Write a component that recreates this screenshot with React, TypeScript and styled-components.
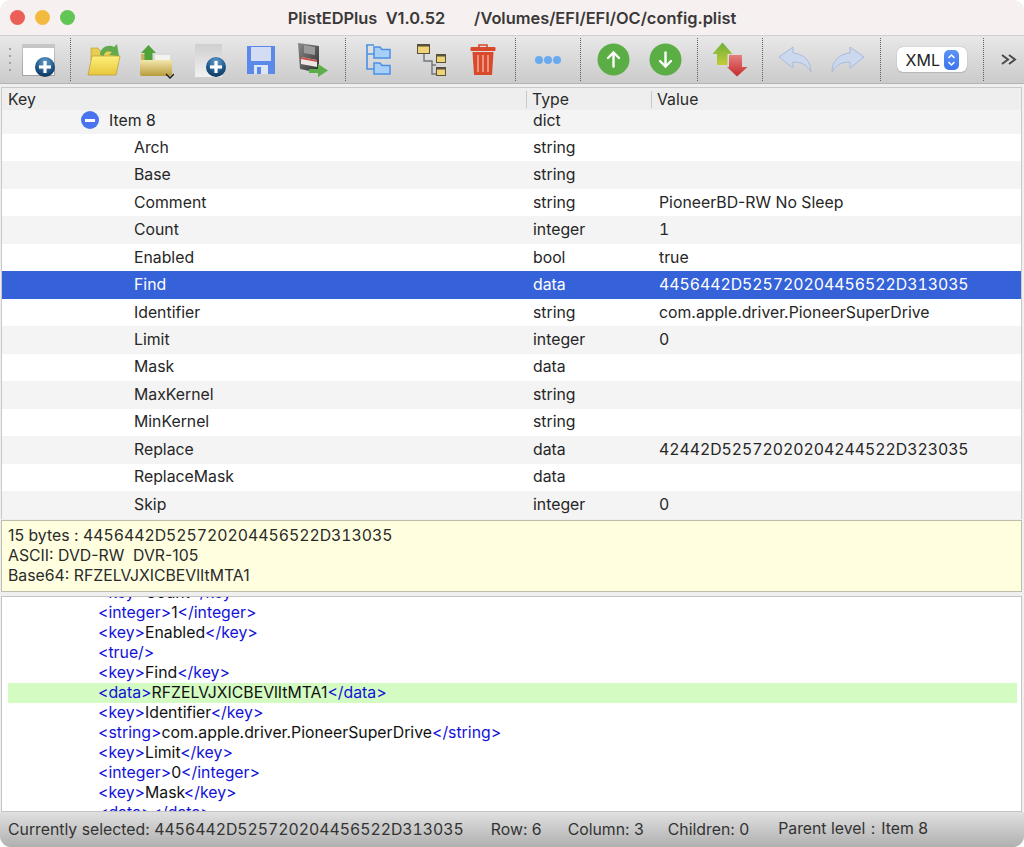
import React from 'react';
import styled, { createGlobalStyle } from 'styled-components';

const GlobalStyle = createGlobalStyle`
  html, body {
    margin: 0;
    padding: 0;
    background: #ffffff;
  }
  body {
    font-family: Inter, "Liberation Sans", sans-serif;
  }
`;

const Window = styled.div`
  width: 1024px;
  height: 847px;
  display: flex;
  flex-direction: column;
  overflow: hidden;
  border-radius: 11px;
  background: #efefef;
  color: #1f1f1f;
`;

const TitleBar = styled.div`
  height: 35px;
  flex: none;
  position: relative;
  display: flex;
  align-items: center;
  justify-content: center;
  background: #f6f0f0;
  border-bottom: 1px solid #d2d0d0;
`;

const Lights = styled.div`
  position: absolute;
  left: 10px;
  top: 10px;
  display: flex;
  gap: 10px;
`;

const Light = styled.span<{ $color: string }>`
  width: 15px;
  height: 15px;
  border-radius: 50%;
  background: ${({ $color }) => $color};
`;

const Title = styled.div`
  font-size: 16.4px;
  font-weight: 600;
  color: #3a3838;
  white-space: pre;
`;

const Toolbar = styled.div`
  height: 47px;
  flex: none;
  display: flex;
  align-items: center;
  background: linear-gradient(to bottom, #e9e8e8, #cbcbcb);
  border-bottom: 1px solid #b4b4b4;
`;

const Tool = styled.div<{ $width: number; $left?: number }>`
  width: ${({ $width }) => $width}px;
  margin-left: ${({ $left }) => $left ?? 0}px;
  height: 100%;
  flex: none;
  display: flex;
  align-items: center;
  justify-content: center;
`;

const Separator = styled.div<{ $left?: number }>`
  width: 0;
  height: 43px;
  flex: none;
  margin-left: ${({ $left }) => $left ?? 0}px;
  border-left: 1px dotted #5f5f62;
`;

const Grip = styled.div`
  width: 20px;
  flex: none;
  height: 24px;
  padding-left: 9px;
  box-sizing: border-box;
  display: flex;
  flex-direction: column;
  justify-content: space-between;
  & > span {
    width: 2px;
    height: 2px;
    background: #8d8d8d;
    border-radius: 50%;
  }
`;

const FormatSelect = styled.div`
  width: 70px;
  height: 25px;
  background: #ffffff;
  border-radius: 6px;
  box-shadow: 0 0 1px rgba(0, 0, 0, 0.35), 0 1px 1px rgba(0, 0, 0, 0.1);
  display: flex;
  align-items: center;
  justify-content: flex-end;
  gap: 4px;
  padding-right: 8px;
  box-sizing: border-box;
  font-size: 16px;
  color: #222222;
`;

const Stepper = styled.span`
  width: 15px;
  height: 20px;
  border-radius: 5px;
  background: linear-gradient(to bottom, #5a93f5, #3f73ee);
  display: flex;
  align-items: center;
  justify-content: center;
`;

const TreePanel = styled.div`
  margin: 3px 2px 0 1px;
  height: 432px;
  flex: none;
  border: 1px solid #c9c9c9;
  border-bottom: none;
  background: #ffffff;
  overflow: hidden;
  box-sizing: border-box;
  font-size: 15.8px;
`;

const HeaderRow = styled.div`
  height: 22px;
  display: grid;
  grid-template-columns: 524px 125px 1fr;
  align-items: center;
  background: #eeeeee;
  color: #2a2a2a;
`;

const HeaderCell = styled.div<{ $divider?: boolean }>`
  height: 17px;
  line-height: 17px;
  padding-left: ${({ $divider }) => ($divider ? 5 : 6)}px;
  border-left: ${({ $divider }) => ($divider ? '1px solid #c8c8c8' : 'none')};
`;

const Row = styled.div<{ $tone: 'plain' | 'alt' | 'selected' }>`
  height: 27.47px;
  display: grid;
  grid-template-columns: 531px 126px 1fr;
  align-items: center;
  padding-bottom: 1px;
  box-sizing: border-box;
  background: ${({ $tone }) =>
    $tone === 'selected' ? '#3562d9' : $tone === 'alt' ? '#f4f4f4' : '#ffffff'};
  color: ${({ $tone }) => ($tone === 'selected' ? '#ffffff' : '#262626')};
`;

const FirstRow = styled(Row)`
  height: 24px;
  padding-bottom: 4px;
`;

const KeyCell = styled.div<{ $indent: number }>`
  padding-left: ${({ $indent }) => $indent}px;
  display: flex;
  align-items: center;
  gap: 10px;
`;

const Cell = styled.div`
  white-space: pre;
`;

const Numeric = styled.span`
  font-variant-numeric: tabular-nums;
`;

const MinusBadge = styled.span`
  width: 18px;
  height: 18px;
  border-radius: 50%;
  background: #4a74ef;
  display: flex;
  align-items: center;
  justify-content: center;
  &::after {
    content: '';
    width: 10px;
    height: 3px;
    background: #ffffff;
  }
`;

const InfoPanel = styled.div`
  height: 72px;
  flex: none;
  margin: 1px 2px 0 1px;
  box-sizing: border-box;
  border: 1px solid #bdbdaa;
  background: #ffffe0;
  padding: 5px 6px 0;
  font-size: 15.8px;
  line-height: 20px;
  color: #2a2a2a;
  white-space: pre;
`;

const XmlPanel = styled.div`
  height: 216px;
  flex: none;
  margin: 4px 2px 0 1px;
  box-sizing: border-box;
  border: 1px solid #c4c4c4;
  background: #ffffff;
  overflow: hidden;
  font-size: 15.8px;
  line-height: 20px;
`;

const XmlLines = styled.div`
  margin-top: -14px;
  padding: 0 6px;
`;

const XmlLine = styled.div<{ $active?: boolean }>`
  height: 20px;
  width: 1009px;
  padding-left: 90px;
  box-sizing: border-box;
  white-space: pre;
  color: #111111;
  background: ${({ $active }) => ($active ? '#d4fcc2' : 'transparent')};
`;

const ActiveBand = styled(XmlLine)`
  position: relative;
  top: 0;
`;

const Tag = styled.span`
  color: #1212d8;
`;

const StatusBar = styled.div`
  flex: 1;
  display: flex;
  align-items: center;
  padding-left: 8px;
  font-size: 15.8px;
  color: #333333;
  background: linear-gradient(to bottom, #e0e0e0, #b0b0b0);
  white-space: pre;
`;

const StatusItem = styled.span<{ $left: number }>`
  margin-left: ${({ $left }) => $left}px;
`;

const PlusDisc = ({ x, y, r, id }: { x: number; y: number; r: number; id: string }) => (
  <>
    <defs>
      <radialGradient id={id} cx="50%" cy="25%" r="80%">
        <stop offset="0%" stopColor="#6aa0cf" />
        <stop offset="60%" stopColor="#1d5688" />
        <stop offset="100%" stopColor="#0f2f50" />
      </radialGradient>
    </defs>
    <circle cx={x} cy={y} r={r} fill={`url(#${id})`} />
    <rect x={x - r * 0.6} y={y - 1.6} width={r * 1.2} height={3.2} fill="#ffffff" />
    <rect x={x - 1.6} y={y - r * 0.6} width={3.2} height={r * 1.2} fill="#ffffff" />
  </>
);

const NewWindowIcon = () => (
  <svg width="36" height="36" viewBox="0 0 36 36">
    <defs>
      <linearGradient id="nw" x1="0" y1="0" x2="0" y2="1">
        <stop offset="0" stopColor="#c8c8c8" />
        <stop offset="1" stopColor="#a0a0a0" />
      </linearGradient>
    </defs>
    <rect x="1" y="2" width="33" height="32" fill="url(#nw)" />
    <rect x="2" y="6" width="31" height="27" fill="#ffffff" />
    <PlusDisc x={24} y={25} r={10} id="nw-d" />
  </svg>
);

const OpenFolderIcon = () => (
  <svg width="36" height="36" viewBox="0 0 36 36">
    <defs>
      <linearGradient id="of" x1="0" y1="0" x2="0" y2="1">
        <stop offset="0" stopColor="#fdf07a" />
        <stop offset="1" stopColor="#e8c63c" />
      </linearGradient>
    </defs>
    <path d="M5 6 H12 L14 9 H30 V18 H5 Z" fill="#e6cd55" stroke="#b89a30" strokeWidth="0.6" />
    <path
      d="M14 13 C14 5 23 2 28 5 L31 2 L33 14 L23 13 L26 10 C22 8 18 10 18 14 Z"
      fill="#62ab4c"
    />
    <path d="M6 14 H34 L30 33 H2 Z" fill="url(#of)" stroke="#b89a30" strokeWidth="0.7" />
  </svg>
);

const ExportFolderIcon = () => (
  <svg width="36" height="40" viewBox="0 0 36 40">
    <defs>
      <linearGradient id="ef" x1="0" y1="0" x2="0" y2="1">
        <stop offset="0" stopColor="#f3e7ac" />
        <stop offset="1" stopColor="#b99b3c" />
      </linearGradient>
    </defs>
    <path d="M3 14 H14 V33 H3 Z" fill="#cdb35c" />
    <path d="M10.5 5 L18 13 H14.5 V20 H6.5 V13 H3 Z" fill="#4fa33a" />
    <rect x="17" y="15" width="15" height="6" rx="1" fill="#f4f4ee" />
    <path d="M2 20 H34 V34 Q34 36 32 36 H4 Q2 36 2 34 Z" fill="url(#ef)" />
    <path d="M30 35 L34 39 L38 35" transform="translate(-2 -1)" fill="none" stroke="#1a1a1a" strokeWidth="1.3" />
  </svg>
);

const NewFileIcon = () => (
  <svg width="36" height="36" viewBox="0 0 36 36">
    <defs>
      <linearGradient id="nf" x1="0" y1="0" x2="0" y2="1">
        <stop offset="0" stopColor="#cfcfcf" />
        <stop offset="1" stopColor="#f2f2f2" />
      </linearGradient>
    </defs>
    <rect x="3" y="2" width="27" height="33" fill="url(#nf)" />
    <PlusDisc x={24} y={25} r={10} id="nf-d" />
  </svg>
);

const SaveIcon = () => (
  <svg width="28" height="28" viewBox="0 0 28 28">
    <path d="M0 0 H28 V28 H0 Z" fill="#5a89ea" />
    <rect x="4" y="1" width="20" height="14" fill="#d3dcf2" />
    <rect x="7" y="19" width="14" height="9" fill="#dfe5f4" />
    <rect x="10" y="21" width="4" height="7" fill="#5a89ea" />
  </svg>
);

const SaveAsIcon = () => (
  <svg width="32" height="36" viewBox="0 0 32 36">
    <defs>
      <linearGradient id="sa" x1="0" y1="0" x2="1" y2="1">
        <stop offset="0" stopColor="#8a8a8a" />
        <stop offset="1" stopColor="#2e2e2e" />
      </linearGradient>
    </defs>
    <path d="M1 1 L22 4 V31 L3 27 Z" fill="url(#sa)" />
    <path d="M7 3 L18 5 V13 L7 11 Z" fill="#9b9b9b" />
    <path d="M4 15 L20 18 V25 L4 22 Z" fill="#ece7e2" />
    <path d="M4 15 L20 18 V20 L4 17 Z" fill="#c8514e" />
    <path d="M12 27 H21 V22 L31 28.5 L21 35 V31 H12 Z" fill="#5cae4a" />
  </svg>
);

const BlueTreeIcon = () => (
  <svg width="26" height="32" viewBox="0 0 26 32">
    <g fill="#a8cff8" stroke="#4a90e6" strokeWidth="1.5">
      <path d="M9 3 H15 L17 5.5 H25 V14 H9 Z" />
      <path d="M9 19 H15 L17 21.5 H25 V30 H9 Z" />
    </g>
    <path d="M1 1 H9 M2 1 V25 H9 M2 10 H9" fill="none" stroke="#4a90e6" strokeWidth="1.6" />
  </svg>
);

const SmallFolder = ({ x, y, w, h }: { x: number; y: number; w: number; h: number }) => (
  <g>
    <rect x={x} y={y} width={w} height={h} fill="#57503a" />
    <rect x={x + 1} y={y + 2.5} width={w - 2} height={h - 3.5} fill="#f0d277" />
  </g>
);

const FolderTreeIcon = () => (
  <svg width="30" height="34" viewBox="0 0 30 34">
    <path d="M8 11 V18 H16 V31 H20 M16 22 H20" fill="none" stroke="#70777d" strokeWidth="1.4" />
    <SmallFolder x={1} y={1} w={13} h={10} />
    <SmallFolder x={20} y={11} w={10} h={9} />
    <SmallFolder x={20} y={24} w={10} h={9} />
  </svg>
);

const TrashIcon = () => (
  <svg width="26" height="33" viewBox="0 0 26 33">
    <path d="M9 2 H17 V5 H9 Z" fill="none" stroke="#d6492b" strokeWidth="1.6" />
    <rect x="0.5" y="4" width="25" height="4" rx="1" fill="#d9492c" />
    <path d="M2.5 9 H23.5 L22 32 H4 Z" fill="#d9492c" />
    <path d="M8 12 V29 M13 12 V29 M18 12 V29" stroke="#f0a08c" strokeWidth="1.7" />
  </svg>
);

const MoreIcon = () => (
  <svg width="26" height="8" viewBox="0 0 26 8">
    <g fill="#6aabf0">
      <circle cx="4" cy="4" r="4" />
      <circle cx="13" cy="4" r="4" />
      <circle cx="22" cy="4" r="4" />
    </g>
  </svg>
);

const ArrowDisc = ({ down }: { down?: boolean }) => (
  <svg width="33" height="33" viewBox="0 0 33 33">
    <circle cx="16.5" cy="16.5" r="16" fill="#5aae45" />
    <g
      transform={down ? 'rotate(180 16.5 16.5)' : undefined}
      fill="none"
      stroke="#ffffff"
      strokeWidth="2.4"
      strokeLinecap="round"
    >
      <path d="M16.5 23.5 V10" />
      <path d="M11 15 L16.5 9.5 L22 15" />
    </g>
  </svg>
);

const SwapIcon = () => (
  <svg width="36" height="35" viewBox="0 0 36 35">
    <defs>
      <linearGradient id="up" x1="0" y1="0" x2="0" y2="1">
        <stop offset="0" stopColor="#6bb03a" />
        <stop offset="1" stopColor="#c4cb3a" />
      </linearGradient>
      <linearGradient id="dn" x1="0" y1="0" x2="0" y2="1">
        <stop offset="0" stopColor="#e58080" />
        <stop offset="1" stopColor="#c62a2a" />
      </linearGradient>
    </defs>
    <path d="M10.5 0.5 L20.5 12 H15.5 V23 H5 V12 H0.5 Z" fill="url(#up)" />
    <path d="M17 13 H30 V25 H35.5 L25 34.5 L15 25 H17 Z" fill="url(#dn)" />
  </svg>
);

const CurveArrow = ({ flip }: { flip?: boolean }) => (
  <svg width="34" height="27" viewBox="0 0 34 27">
    <path
      transform={flip ? 'matrix(-1 0 0 1 34 0)' : undefined}
      d="M1 11 L15 1 V7 C26 8 33 15 33 26 C29 19 24 16 15 16 V22 Z"
      fill="#cbd8ee"
      stroke="#a9bbdb"
      strokeWidth="1"
    />
  </svg>
);

const Chevrons = () => (
  <svg width="16" height="11" viewBox="0 0 16 11">
    <path d="M1 1 L7 5.5 L1 10 M8 1 L14 5.5 L8 10" fill="none" stroke="#4a4a4a" strokeWidth="2" />
  </svg>
);

const StepperGlyph = () => (
  <svg width="9" height="14" viewBox="0 0 9 14">
    <path d="M1.5 5 L4.5 2 L7.5 5 M1.5 9 L4.5 12 L7.5 9" fill="none" stroke="#ffffff" strokeWidth="1.5" />
  </svg>
);

const rows = [
  { key: 'Arch', type: 'string', value: '' },
  { key: 'Base', type: 'string', value: '' },
  { key: 'Comment', type: 'string', value: 'PioneerBD-RW No Sleep' },
  { key: 'Count', type: 'integer', value: '1', numeric: true },
  { key: 'Enabled', type: 'bool', value: 'true' },
  { key: 'Find', type: 'data', value: '4456442D525720204456522D313035', numeric: true },
  { key: 'Identifier', type: 'string', value: 'com.apple.driver.PioneerSuperDrive' },
  { key: 'Limit', type: 'integer', value: '0', numeric: true },
  { key: 'Mask', type: 'data', value: '' },
  { key: 'MaxKernel', type: 'string', value: '' },
  { key: 'MinKernel', type: 'string', value: '' },
  { key: 'Replace', type: 'data', value: '42442D52572020204244522D323035', numeric: true },
  { key: 'ReplaceMask', type: 'data', value: '' },
  { key: 'Skip', type: 'integer', value: '0', numeric: true },
];

const xmlLines: Array<{ tag: string; body?: string; active?: boolean; empty?: boolean }> = [
  { tag: 'key', body: 'Count' },
  { tag: 'integer', body: '1' },
  { tag: 'key', body: 'Enabled' },
  { tag: 'true', empty: true },
  { tag: 'key', body: 'Find' },
  { tag: 'data', body: 'RFZELVJXICBEVlItMTA1', active: true },
  { tag: 'key', body: 'Identifier' },
  { tag: 'string', body: 'com.apple.driver.PioneerSuperDrive' },
  { tag: 'key', body: 'Limit' },
  { tag: 'integer', body: '0' },
  { tag: 'key', body: 'Mask' },
  { tag: 'data', body: '' },
];

const App: React.FC = () => (
  <>
    <GlobalStyle />
    <Window>
      <TitleBar>
        <Lights>
          <Light $color="#ec5f57" />
          <Light $color="#f2bb3f" />
          <Light $color="#62c654" />
        </Lights>
        <Title>{'PlistEDPlus  V1.0.52       /Volumes/EFI/EFI/OC/config.plist'}</Title>
      </TitleBar>
      <Toolbar>
        <Grip>
          <span />
          <span />
          <span />
          <span />
        </Grip>
        <Tool $width={38}><NewWindowIcon /></Tool>
        <Separator $left={12} />
        <Tool $left={7} $width={52}><OpenFolderIcon /></Tool>
        <Tool $width={52}><ExportFolderIcon /></Tool>
        <Tool $width={56}><NewFileIcon /></Tool>
        <Tool $width={46}><SaveIcon /></Tool>
        <Tool $width={58}><SaveAsIcon /></Tool>
        <Separator $left={3} />
        <Tool $left={6} $width={52}><BlueTreeIcon /></Tool>
        <Tool $width={54}><FolderTreeIcon /></Tool>
        <Tool $width={50}><TrashIcon /></Tool>
        <Separator $left={7} />
        <Tool $width={64}><MoreIcon /></Tool>
        <Separator />
        <Tool $left={6} $width={52}><ArrowDisc /></Tool>
        <Tool $width={52}><ArrowDisc down /></Tool>
        <Separator $left={6} />
        <Tool $width={64}><SwapIcon /></Tool>
        <Separator />
        <Tool $left={6} $width={52}><CurveArrow /></Tool>
        <Tool $width={54}><CurveArrow flip /></Tool>
        <Separator $left={5} />
        <Tool $width={102}>
          <FormatSelect>
            XML
            <Stepper><StepperGlyph /></Stepper>
          </FormatSelect>
        </Tool>
        <Separator />
        <Tool $width={50}><Chevrons /></Tool>
      </Toolbar>
      <TreePanel>
        <HeaderRow>
          <HeaderCell>Key</HeaderCell>
          <HeaderCell $divider>Type</HeaderCell>
          <HeaderCell $divider>Value</HeaderCell>
        </HeaderRow>
        <FirstRow $tone="alt">
          <KeyCell $indent={79}>
            <MinusBadge />
            Item 8
          </KeyCell>
          <Cell>dict</Cell>
          <Cell />
        </FirstRow>
        {rows.map((row, index) => (
          <Row key={row.key} $tone={row.key === 'Find' ? 'selected' : index % 2 === 1 ? 'alt' : 'plain'}>
            <KeyCell $indent={132}>{row.key}</KeyCell>
            <Cell>{row.type}</Cell>
            <Cell>{row.numeric ? <Numeric>{row.value}</Numeric> : row.value}</Cell>
          </Row>
        ))}
      </TreePanel>
      <InfoPanel>
        <div>15 bytes : <Numeric>4456442D525720204456522D313035</Numeric></div>
        <div>{'ASCII: DVD-RW  DVR-105'}</div>
        <div>Base64: RFZELVJXICBEVlItMTA1</div>
      </InfoPanel>
      <XmlPanel>
        <XmlLines>
          {xmlLines.map((line, index) => {
            const Line = line.active ? ActiveBand : XmlLine;
            return (
              <Line key={index} $active={line.active}>
                {line.empty ? (
                  <Tag>{`<${line.tag}/>`}</Tag>
                ) : (
                  <>
                    <Tag>{`<${line.tag}>`}</Tag>
                    {line.body}
                    <Tag>{`</${line.tag}>`}</Tag>
                  </>
                )}
              </Line>
            );
          })}
        </XmlLines>
      </XmlPanel>
      <StatusBar>
        <span>Currently selected: <Numeric>4456442D525720204456522D313035</Numeric></span>
        <StatusItem $left={27}>Row: 6</StatusItem>
        <StatusItem $left={26}>Column: 3</StatusItem>
        <StatusItem $left={24}>Children: 0</StatusItem>
        <StatusItem $left={29}>Parent level：Item 8</StatusItem>
      </StatusBar>
    </Window>
  </>
);

export default App;
